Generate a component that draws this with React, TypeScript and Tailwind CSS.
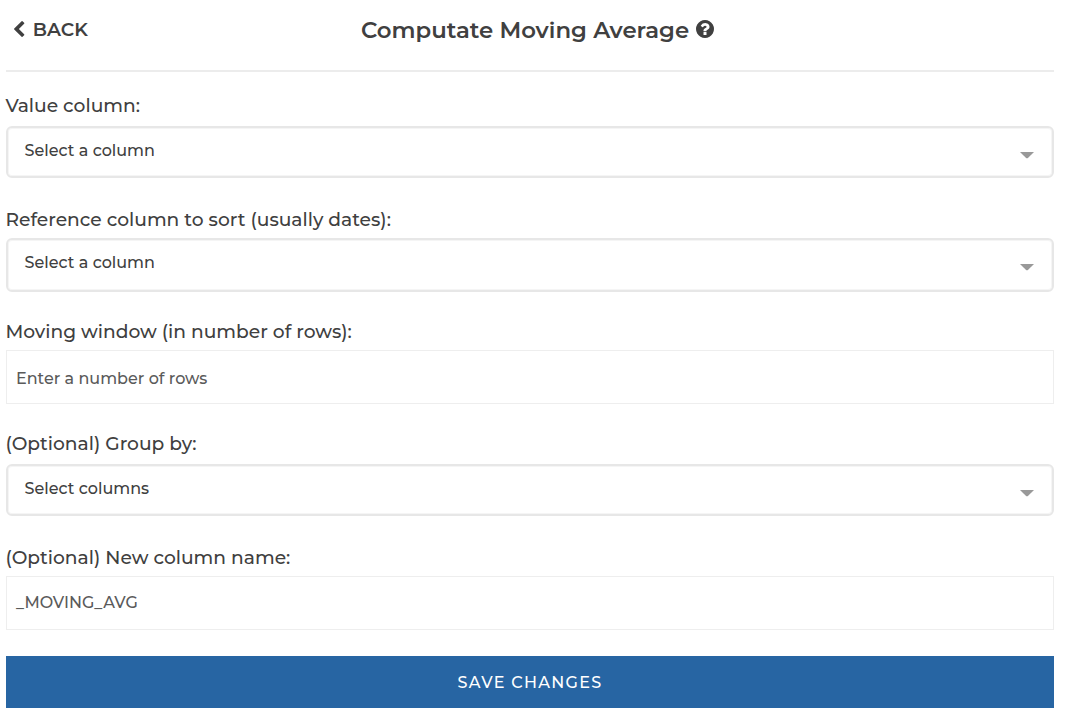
import React from "react";

type FieldProps = {
  label: string;
  className: string;
  children: React.ReactNode;
};

function Field({ label, className, children }: FieldProps) {
  return (
    <div className={`flex flex-col ${className}`}>
      <label className="-ml-[0.6px] flex h-5 items-center whitespace-nowrap text-[18.66px] leading-5">
        {label}
      </label>
      {children}
    </div>
  );
}

type SelectProps = { text: string; className: string };

function Select({ text, className }: SelectProps) {
  return (
    <button
      type="button"
      className={`flex w-full items-start justify-between rounded-[6px] border-2 border-[#e7e7e7] bg-white pr-[18px] pl-[17px] text-left shadow-[inset_0_0_0_1px_#f5f5f5] ${className}`}
    >
      <span className="mt-[13px] -ml-[0.4px] text-[16px] leading-5 font-medium">{text}</span>
      <svg className="mt-6 h-[7px] w-[14px] shrink-0" viewBox="0 0 14 7">
        <path d="M0 0h14L8.2 5.7q-1.2 1-2.4 0z" fill="#999" />
      </svg>
    </button>
  );
}

function ChevronLeftIcon() {
  return (
    <svg className="-mt-[3px] h-4 w-[10.4px]" viewBox="410 26 1036 1612" fill="currentColor">
      <path d="M1427 301l-531 531 531 531q19 19 19 45t-19 45l-166 166q-19 19-45 19t-45-19l-742-742q-19-19-19-45t19-45l742-742q19-19 45-19t45 19l166 166q19 19 19 45t-19 45z" />
    </svg>
  );
}

function HelpIcon() {
  return (
    <svg className="-mt-[2px] size-[18px]" viewBox="128 128 1536 1536" fill="currentColor">
      <path d="M1024 1376v-192q0-14-9-23t-23-9h-192q-14 0-23 9t-9 23v192q0 14 9 23t23 9h192q14 0 23-9t9-23zm256-672q0-88-55.5-163t-138.5-116-170-41q-243 0-371 213-15 24 8 42l132 100q7 6 19 6 16 0 25-12 53-68 86-92 34-24 86-24 48 0 85.5 26t37.5 59q0 38-20 61t-68 45q-63 28-115.5 86.5t-52.5 125.5v36q0 14 9 23t23 9h192q14 0 23-9t9-23q0-19 21.5-49.5t54.5-49.5q32-18 49-28.5t46-35 44.5-48 28-60.5 12.5-81zm384 192q0 209-103 385.5t-279.5 279.5-385.5 103-385.5-103-279.5-279.5-103-385.5 103-385.5 279.5-279.5 385.5-103 385.5 103 279.5 279.5 103 385.5z" />
    </svg>
  );
}

export default function App() {
  return (
    <main className="flex h-[718px] w-full flex-col bg-white pr-3 pl-1.5 font-['Montserrat',Inter,sans-serif] font-medium text-[#404040]">
      <header className="grid h-[72px] shrink-0 grid-cols-[300px_1fr_285px] border-b-2 border-[#ececec]">
        <button type="button" className="mt-5 ml-[8.4px] flex h-5 items-center gap-[8px] text-[18.66px] leading-5 font-semibold">
          <ChevronLeftIcon />
          <span>BACK</span>
        </button>
        <h1 className="mt-[15px] flex h-[30px] items-center justify-center gap-[7px] whitespace-nowrap text-[22.8px] leading-[30px] font-semibold">
          <span>Computate Moving Average</span>
          <HelpIcon />
        </h1>
      </header>

      <Field label="Value column:" className="mt-6 gap-[10px]">
        <Select text="Select a column" className="h-[52px]" />
      </Field>
      <Field label="Reference column to sort (usually dates):" className="mt-8 gap-2">
        <Select text="Select a column" className="h-[54px]" />
      </Field>
      <Field label="Moving window (in number of rows):" className="mt-[30px] gap-2">
        <div className="flex h-[54px] items-center border border-[#eee] pt-1 pl-[9px] text-[16px] leading-5 text-[#5a5a5a]">
          Enter a number of rows
        </div>
      </Field>
      <Field label="(Optional) Group by:" className="mt-[30px] gap-[10px]">
        <Select text="Select columns" className="h-[52px]" />
      </Field>
      <Field label="(Optional) New column name:" className="mt-8 gap-2">
        <div className="flex h-[54px] items-center border border-[#eee] pl-[9px] text-[16px] leading-5 text-[#5a5a5a]">
          _MOVING_AVG
        </div>
      </Field>

      <button type="button" className="mt-[26px] flex h-[52px] shrink-0 items-center justify-center bg-[#2765a3] pt-[2px] text-[16px] leading-5 text-white">
        <span className="tracking-[1.3px]">SAVE CHANGES</span>
      </button>
    </main>
  );
}
